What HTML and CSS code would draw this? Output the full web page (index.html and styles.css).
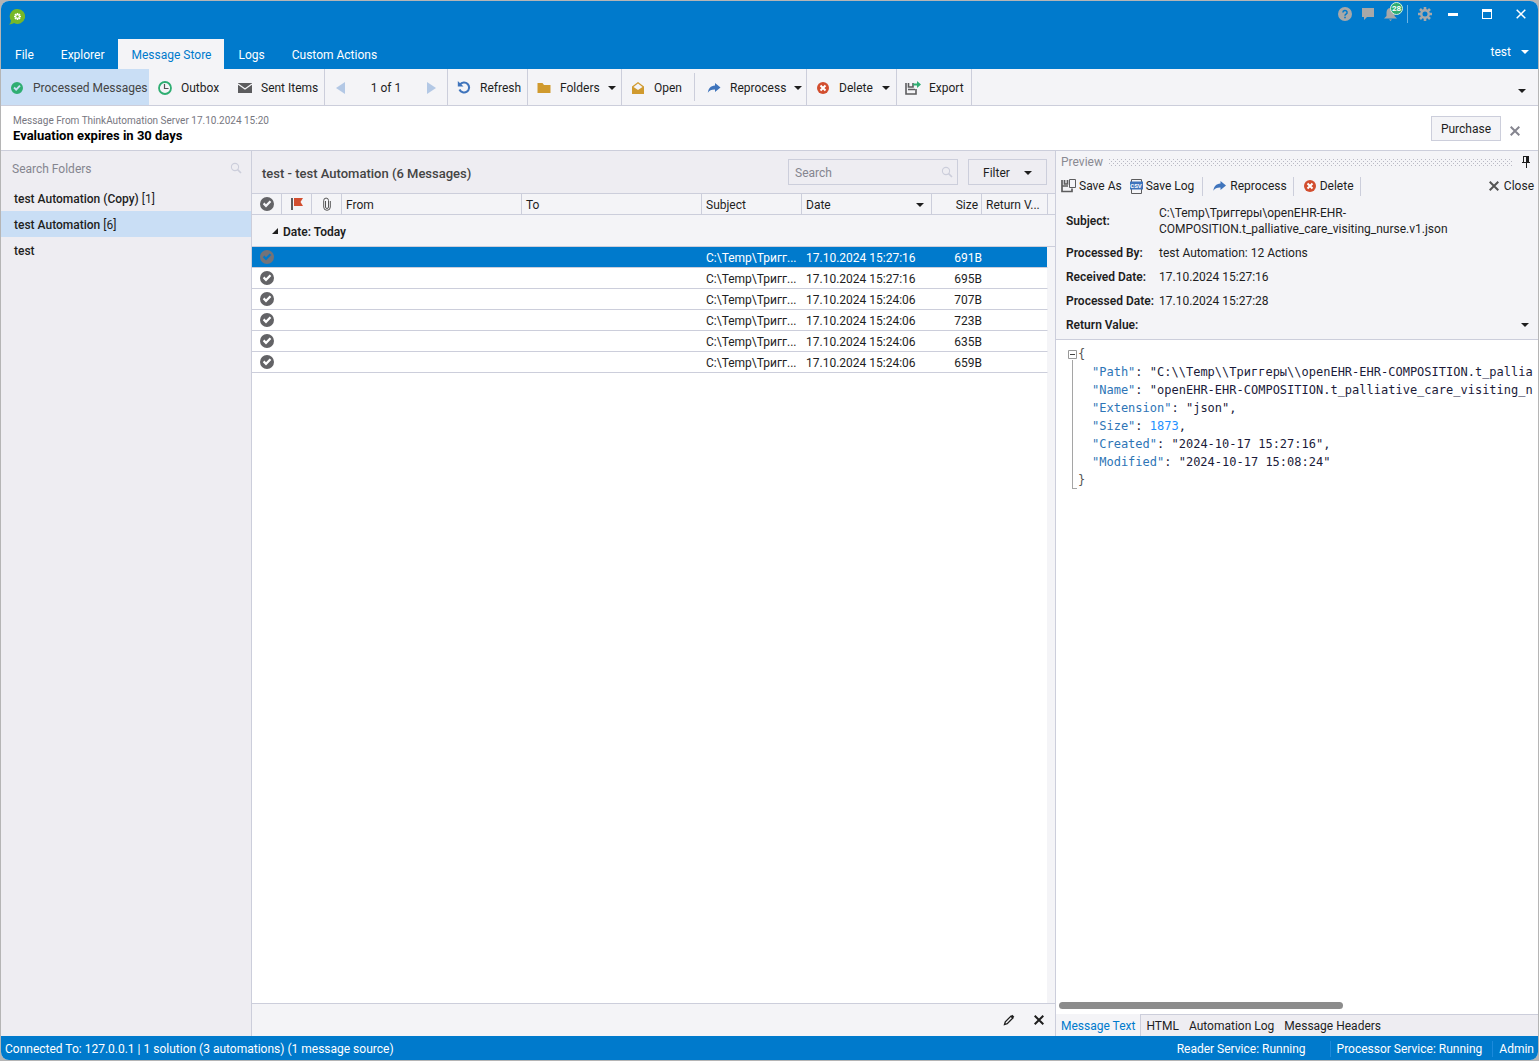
FILE: index.html
```html
<!DOCTYPE html>
<html lang="en">
<head>
  <meta charset="UTF-8" />
  <meta name="viewport" content="width=device-width, initial-scale=1.0" />
  <title>ThinkAutomation - Message Store</title>
  <link rel="stylesheet" href="styles.css">
</head>
<body>
  <!-- shared icons -->
  <svg class="defs" width="0" height="0">
    <symbol id="i-tick" viewBox="0 0 14 14"><path fill-rule="evenodd" fill="currentColor" d="M7 0a7 7 0 1 1 0 14A7 7 0 0 1 7 0zM2.8 7.2L6 10.4L11.3 5L9.7 3.5L6 7.2L4.4 5.6z"/></symbol>
    <symbol id="i-search" viewBox="0 0 12 12"><circle cx="5" cy="5" r="3.6" fill="none" stroke="currentColor" stroke-width="1.1"/><path d="M7.6 7.6L11 11" stroke="currentColor" stroke-width="1.6"/></symbol>
    <symbol id="i-caret" viewBox="0 0 8 4"><path fill="currentColor" d="M0 0h8L4 4z"/></symbol>
    <symbol id="i-redo" viewBox="0 0 13 12"><path fill="#3f74bc" d="M7.5 1L13 5.5L7.5 10V7.5C4 7.4 2 8.3.3 10.8C.8 6.600 3 3.700 7.500 3.400z"/></symbol>
    <symbol id="i-delete" viewBox="0 0 12 12"><circle cx="6" cy="6" r="6" fill="#d24e2f"/><path d="M3.500 3.500L8.500 8.500M8.500 3.500L3.500 8.500" stroke="#fff" stroke-width="2"/></symbol>
    <symbol id="i-x" viewBox="0 0 10 10"><path d="M.7 .7L9.300 9.300M9.300 .7L.7 9.300" stroke="currentColor" stroke-width="2"/></symbol>
  </svg>

  <div class="window">
    <header class="titlebar">
      <div class="title-row">
        <svg class="logo" width="16" height="16" viewBox="0 0 16 16"><path fill="#76b82a" d="M8.500 0A7.500 7.500 0 1 1 5 14.100Q3 15.600 0 15.500Q2 14 2 11.600A7.500 7.500 0 0 1 8.500 0z"/><g stroke="#fff" stroke-width="1.600"><path d="M8.500 4v7M5 7.500h7M6 5l5 5M11 5l-5 5"/></g><circle cx="8.500" cy="7.500" r="1.200" fill="#76b82a"/></svg>
        <div class="title-icons">
          <button aria-label="Help"><svg width="14" height="14" viewBox="0 0 14 14"><circle cx="7" cy="7" r="7" fill="#a8a8a8"/><path d="M4.900 5.400a2.100 2 0 1 1 3 1.800Q7 7.700 7 8.700" fill="none" stroke="#007acc" stroke-width="1.500"/><path d="M6.200 9.800h1.600v1.500H6.200z" fill="#007acc"/></svg></button>
          <button aria-label="Feedback"><svg width="12" height="12" viewBox="0 0 12 12"><path d="M0 0h12v9H5l-3 3V9H0z" fill="#a8a8a8"/></svg></button>
          <button class="bell" aria-label="Notifications"><svg width="14" height="14" viewBox="0 0 14 14"><path d="M6.500 1C9 1 10.500 3 10.500 5.500V9L13 11.500H0L2.500 9V5.500C2.500 3 4 1 6.500 1zM5 12.500h3L6.500 14z" fill="#a8a8a8"/></svg><span class="badge">28</span></button>
          <span class="title-sep"></span>
          <button aria-label="Settings"><svg width="14" height="14" viewBox="0 0 14 14"><g stroke="#a8a8a8" stroke-width="2.600"><path d="M7 0v3M7 11v3M0 7h3M11 7h3M2 2l2.200 2.200M9.800 9.800L12 12M12 2L9.800 4.200M4.200 9.800L2 12"/></g><circle cx="7" cy="7" r="3.700" fill="none" stroke="#a8a8a8" stroke-width="2.400"/></svg></button>
          <button aria-label="Minimize"><svg width="10" height="10" viewBox="0 0 10 10"><path d="M0 4h10v3H0z" fill="#fff"/></svg></button>
          <button aria-label="Maximize"><svg width="10" height="10" viewBox="0 0 10 10"><path d="M0 0h10v10H0zM1 3v6h8V3z" fill="#fff" fill-rule="evenodd"/></svg></button>
          <button aria-label="Close window"><svg width="10" height="10" viewBox="0 0 10 10"><path d="M.7 .7L9.300 9.300M9.300 .7L.7 9.300" stroke="#fff" stroke-width="1.500"/></svg></button>
        </div>
      </div>
      <div class="tab-row">
        <nav class="tabs">
          <a href="#">File</a>
          <a href="#">Explorer</a>
          <a href="#" class="active">Message Store</a>
          <a href="#">Logs</a>
          <a href="#">Custom Actions</a>
        </nav>
        <button class="user">test <svg width="8" height="4"><use href="#i-caret"/></svg></button>
      </div>
    </header>

    <div class="toolbar">
      <button class="selected"><svg class="green" width="12" height="12"><use href="#i-tick"/></svg>Processed Messages</button>
      <button><svg width="14" height="14" viewBox="0 0 14 14"><circle cx="7" cy="7" r="6" fill="none" stroke="#2fae72" stroke-width="1.800"/><path d="M6.500 3v4.500H10.500" fill="none" stroke="#555" stroke-width="1.200"/></svg>Outbox</button>
      <button class="line"><svg width="14" height="10" viewBox="0 0 14 10"><path d="M0 0h14v10H0z" fill="#5c5c5e"/><path d="M0 1l7 5l7-5" fill="none" stroke="#f4f4f7" stroke-width="1.300"/></svg>Sent Items</button>
      <div class="pager line">
        <button aria-label="Previous page"><svg width="9" height="12" viewBox="0 0 9 12"><path d="M9 0v12L0 6z" fill="#b3c8e5"/></svg></button>
        <span>1 of 1</span>
        <button aria-label="Next page"><svg width="9" height="12" viewBox="0 0 9 12"><path d="M0 0v12L9 6z" fill="#b3c8e5"/></svg></button>
      </div>
      <button class="line"><svg width="13" height="13" viewBox="0 0 13 13"><path d="M2.500 3.600A5 5 0 1 1 2 8.500" fill="none" stroke="#3f74bc" stroke-width="2.100"/><path d="M.3 0L6 5.500H.3z" fill="#3f74bc"/></svg>Refresh</button>
      <button class="line"><svg width="13" height="12" viewBox="0 0 13 12"><path d="M0 1h5l1.500 2H13v8H0z" fill="#d09a2e"/></svg>Folders<svg class="caret" width="8" height="4"><use href="#i-caret"/></svg></button>
      <button class="short-line"><svg width="12" height="12" viewBox="0 0 12 12"><path d="M0 4.500L6 0l6 4.500V12H0z" fill="#d09a2e"/><path d="M1.500 5L6 1.600L10.500 5L6 8z" fill="#f4f4f7"/></svg>Open</button>
      <button class="line"><svg width="13" height="12"><use href="#i-redo"/></svg>Reprocess<svg class="caret" width="8" height="4"><use href="#i-caret"/></svg></button>
      <button class="line"><svg width="12" height="12"><use href="#i-delete"/></svg>Delete<svg class="caret" width="8" height="4"><use href="#i-caret"/></svg></button>
      <button class="line"><svg width="16" height="14" viewBox="0 0 16 14"><path d="M1 2v11h10V8M3.500 2v4h4.500V2M3 8.500h7" fill="none" stroke="#5c5c5e" stroke-width="1.600"/><path d="M8 2.500h4V0l4 3.500L12 7V4.500H8z" fill="#2fae72"/></svg>Export</button>
      <button class="overflow" aria-label="More"><svg width="8" height="4"><use href="#i-caret"/></svg></button>
    </div>

    <div class="notice">
      <div class="notice-text">
        <div class="notice-from">Message From ThinkAutomation Server 17.10.2024 15:20</div>
        <div class="notice-title">Evaluation expires in 30 days</div>
      </div>
      <button class="box-btn">Purchase</button>
      <button class="notice-close" aria-label="Dismiss"><svg width="10" height="10"><use href="#i-x"/></svg></button>
    </div>

    <main class="main">
      <aside class="folders">
        <div class="folder-search">
          <input type="text" placeholder="Search Folders" aria-label="Search Folders">
          <svg width="12" height="12"><use href="#i-search"/></svg>
        </div>
        <a href="#">test Automation (Copy) <span>[1]</span></a>
        <a href="#" class="selected">test Automation <span>[6]</span></a>
        <a href="#">test</a>
      </aside>

      <section class="messages">
        <div class="messages-head">
          <h1>test - test Automation (6 Messages)</h1>
          <div class="search-box">
            <input type="text" placeholder="Search" aria-label="Search">
            <svg width="12" height="12"><use href="#i-search"/></svg>
          </div>
          <button class="box-btn filter">Filter <svg width="8" height="4"><use href="#i-caret"/></svg></button>
        </div>
        <div class="grid-wrap">
          <table>
            <colgroup>
              <col class="c-icon"><col class="c-icon"><col class="c-icon"><col><col>
              <col class="c-subject"><col class="c-date"><col class="c-size"><col class="c-return"><col class="c-gutter">
            </colgroup>
            <thead>
              <tr>
                <th class="icon"><svg width="14" height="14"><use href="#i-tick"/></svg></th>
                <th class="icon"><svg width="14" height="14" viewBox="0 0 14 14"><path d="M1 1h2v12H1z" fill="#5c5c5e"/><path d="M4 1h9L10.500 5L13 9H4z" fill="#d24e2f"/></svg></th>
                <th class="icon"><svg width="8" height="14" viewBox="0 0 8 14"><path d="M2.500 4v6a1.500 1.500 0 0 0 3 0V3.500a2.400 2.400 0 0 0-4.800 0V10a3.300 3.300 0 0 0 6.600 0V4" fill="none" stroke="#555" stroke-width="1"/></svg></th>
                <th>From</th>
                <th>To</th>
                <th>Subject</th>
                <th><div class="sorted">Date <svg width="8" height="4"><use href="#i-caret"/></svg></div></th>
                <th class="num">Size</th>
                <th>Return V...</th>
                <th class="gutter"></th>
              </tr>
            </thead>
            <tbody>
              <tr class="group"><td colspan="10"><svg width="6" height="6" viewBox="0 0 6 6"><path d="M6 0v6H0z" fill="#1e1e1e"/></svg>Date: Today</td></tr>
              <tr class="selected"><td class="icon"><svg width="14" height="14"><use href="#i-tick"/></svg></td><td></td><td></td><td></td><td></td><td>C:\Temp\Тригг...</td><td>17.10.2024 15:27:16</td><td class="num">691B</td><td class="last"></td><td class="gutter"></td></tr>
              <tr><td class="icon"><svg width="14" height="14"><use href="#i-tick"/></svg></td><td></td><td></td><td></td><td></td><td>C:\Temp\Тригг...</td><td>17.10.2024 15:27:16</td><td class="num">695B</td><td class="last"></td><td class="gutter"></td></tr>
              <tr><td class="icon"><svg width="14" height="14"><use href="#i-tick"/></svg></td><td></td><td></td><td></td><td></td><td>C:\Temp\Тригг...</td><td>17.10.2024 15:24:06</td><td class="num">707B</td><td class="last"></td><td class="gutter"></td></tr>
              <tr><td class="icon"><svg width="14" height="14"><use href="#i-tick"/></svg></td><td></td><td></td><td></td><td></td><td>C:\Temp\Тригг...</td><td>17.10.2024 15:24:06</td><td class="num">723B</td><td class="last"></td><td class="gutter"></td></tr>
              <tr><td class="icon"><svg width="14" height="14"><use href="#i-tick"/></svg></td><td></td><td></td><td></td><td></td><td>C:\Temp\Тригг...</td><td>17.10.2024 15:24:06</td><td class="num">635B</td><td class="last"></td><td class="gutter"></td></tr>
              <tr><td class="icon"><svg width="14" height="14"><use href="#i-tick"/></svg></td><td></td><td></td><td></td><td></td><td>C:\Temp\Тригг...</td><td>17.10.2024 15:24:06</td><td class="num">659B</td><td class="last"></td><td class="gutter"></td></tr>
            </tbody>
          </table>
          <div class="grid-rest"></div>
        </div>
        <div class="messages-foot">
          <button aria-label="Edit"><svg width="12" height="12" viewBox="0 0 12 12"><path d="M1.500 10.500L2.300 7.800L8 2.100L9.900 4L4.200 9.700z" fill="none" stroke="#1e1e1e" stroke-width="1.300"/><path d="M7.500 2.500L9.300.8L11.300 2.700L9.500 4.500z" fill="#1e1e1e"/></svg></button>
          <button aria-label="Clear"><svg width="10" height="10"><use href="#i-x"/></svg></button>
        </div>
      </section>

      <section class="preview">
        <div class="preview-title">
          <span>Preview</span>
          <svg class="grip" height="7"><defs><pattern id="dots" width="4" height="4" patternUnits="userSpaceOnUse"><path d="M0 0h1v1H0zM2 2h1v1H2z" fill="#b9b9c4"/></pattern></defs><rect width="100%" height="7" fill="url(#dots)"/></svg>
          <button aria-label="Pin"><svg width="8" height="12" viewBox="0 0 8 12"><path d="M1 0h6v6h1v1H5v5H4V7H0V6h1zM2 1v5h2V1z" fill="#1e1e1e" fill-rule="evenodd"/></svg></button>
        </div>
        <div class="preview-tools">
          <button><svg width="15" height="15" viewBox="0 0 15 15"><path d="M1 1v11.500h10V9.500M3.500 1v4h3V1M1 7h6" fill="none" stroke="#5c5c5e" stroke-width="1.700"/><path d="M8.500 .5h6v8h-6z" fill="none" stroke="#5c5c5e"/></svg>Save As</button>
          <button><svg width="13" height="15" viewBox="0 0 13 15"><path d="M1.500 .5h10v14h-10z" fill="none" stroke="#5c5c5e"/><path d="M0 2.500h13v8H0z" fill="#3f74bc"/><text x="6" y="9" class="csv">CSV</text></svg>Save Log</button>
          <span class="sep"></span>
          <button><svg width="13" height="12"><use href="#i-redo"/></svg>Reprocess</button>
          <span class="sep"></span>
          <button><svg width="12" height="12"><use href="#i-delete"/></svg>Delete</button>
          <span class="sep"></span>
          <button class="close"><svg width="10" height="10"><use href="#i-x"/></svg>Close</button>
        </div>
        <dl class="details">
          <dt>Subject:</dt><dd>C:\Temp\Триггеры\openEHR-EHR-<br>COMPOSITION.t_palliative_care_visiting_nurse.v1.json</dd>
          <dt>Processed By:</dt><dd>test Automation: 12 Actions</dd>
          <dt>Received Date:</dt><dd>17.10.2024 15:27:16</dd>
          <dt>Processed Date:</dt><dd>17.10.2024 15:27:28</dd>
          <dt>Return Value:</dt><dd class="return"><svg width="8" height="4"><use href="#i-caret"/></svg></dd>
        </dl>
        <div class="editor">
          <div class="source">
            <div class="fold"><svg width="9" height="9" viewBox="0 0 9 9"><path d="M.5 .5h8v8h-8z" fill="none" stroke="#999"/><path d="M2 4h5v1H2z" fill="#444"/></svg><span></span></div>
            <div class="code">
              <div><i>{</i></div>
              <div class="in"><b>"Path"</b>: "C:\\Temp\\Триггеры\\openEHR-EHR-COMPOSITION.t_palliative_care_visiting_nurse.v1.json",</div>
              <div class="in"><b>"Name"</b>: "openEHR-EHR-COMPOSITION.t_palliative_care_visiting_nurse.v1.json",</div>
              <div class="in"><b>"Extension"</b>: "json",</div>
              <div class="in"><b>"Size"</b>: <em>1873</em>,</div>
              <div class="in"><b>"Created"</b>: "2024-10-17 15:27:16",</div>
              <div class="in"><b>"Modified"</b>: "2024-10-17 15:08:24"</div>
              <div><i>}</i></div>
            </div>
          </div>
          <div class="hscroll"><span></span></div>
        </div>
        <nav class="view-tabs">
          <a href="#" class="active">Message Text</a>
          <a href="#">HTML</a>
          <a href="#">Automation Log</a>
          <a href="#">Message Headers</a>
        </nav>
      </section>
    </main>

    <footer class="statusbar">
      <span class="connection">Connected To: 127.0.0.1 | 1 solution (3 automations) (1 message source)</span>
      <span class="reader">Reader Service: Running</span>
      <span class="processor">Processor Service: Running</span>
      <span class="admin">Admin</span>
    </footer>
  </div>
</body>
</html>
```

FILE: styles.css
```css
* {
  box-sizing: border-box;
}
body {
  margin: 0;
  height: 100vh;
  padding: 1px;
  background: #b5b5b5;
  font: 12px/16px Roboto, "Noto Sans", sans-serif;
  color: #1e1e1e;
}
button {
  font: inherit;
  color: inherit;
  background: none;
  border: 0;
  padding: 0;
  display: flex;
  align-items: center;
  white-space: nowrap;
}
a {
  color: inherit;
  text-decoration: none;
}
svg {
  display: block;
  flex: none;
}
.defs {
  position: absolute;
}
input {
  font: inherit;
  color: inherit;
  border: 0;
  padding: 2px 0 0;
  background: none;
  flex: 1;
  min-width: 0;
}
input::placeholder {
  color: #85858f;
}
.window {
  height: 100%;
  display: flex;
  flex-direction: column;
  border-radius: 8px;
  overflow: hidden;
  background: #f4f4f7;
}

/* title bar */
.titlebar {
  background: #007acc;
  color: #fff;
}
.title-row {
  height: 38px;
  display: flex;
  justify-content: space-between;
  align-items: flex-start;
  padding: 5px 0 0 8px;
}
.logo {
  margin-top: 3px;
}
.title-icons {
  display: flex;
  align-items: center;
  height: 16px;
}
.title-icons button {
  width: 23px;
  justify-content: center;
}
.title-icons button:nth-last-child(-n+3) {
  width: 34px;
}
.title-icons .title-sep {
  width: 1px;
  height: 18px;
  background: #6db3e2;
  margin: 0 5px;
}
.bell {
  position: relative;
}
.badge {
  position: absolute;
  left: 11px;
  top: -5px;
  width: 13px;
  height: 13px;
  border-radius: 50%;
  background: #2fae72;
  border: 1px solid #d5efe2;
  font-size: 8px;
  line-height: 11px;
  font-weight: 700;
  text-align: center;
}
.tab-row {
  display: flex;
  justify-content: space-between;
  height: 30px;
}
.tabs {
  display: flex;
}
.tabs a {
  padding: 8px 13px 0 14px;
}
.tabs .active {
  background: #f4f4f7;
  color: #007acc;
}
.user {
  gap: 10px;
  height: 26px;
  padding-right: 9px;
}

/* toolbar */
.toolbar {
  display: grid;
  grid-template-columns: 148px 80px 96px 123px 80px 94px 73px 112px 90px 75px 1fr;
  height: 37px;
  border-bottom: 1px solid #cccedb;
}
.toolbar > button {
  padding: 1px 0 0 8px;
  gap: 8px;
}
/* every leading icon is centred in the same 16px slot */
.toolbar > button > svg:first-child {
  width: 16px;
}
.toolbar .selected {
  background: #c9def5;
  color: #444;
}
.toolbar .line {
  border-right: 1px solid #cccedb;
}
.toolbar .short-line {
  background: linear-gradient(#cccedb, #cccedb) right / 1px 28px no-repeat;
}
.toolbar .short-line + button {
  padding-left: 11px;
}
.toolbar .caret {
  margin-left: auto;
  margin-right: 6px;
}
.toolbar .pager {
  display: flex;
  align-items: center;
  justify-content: space-between;
  padding: 1px 11px 0;
}
.toolbar .overflow {
  justify-content: flex-end;
  padding: 7px 8px 0 0;
}
.green {
  color: #2fae72;
}

/* evaluation notice */
.notice {
  display: flex;
  align-items: center;
  height: 45px;
  padding: 1px 18px 0 12px;
  background: #fff;
  border-bottom: 1px solid #cccedb;
}
.notice-text {
  flex: 1;
}
.notice-from {
  font-size: 10px;
  line-height: 14px;
  color: #77777f;
}
.notice-title {
  font-size: 13px;
  font-weight: 700;
  color: #000;
}
.box-btn {
  height: 25px;
  padding: 0 9px;
  background: #f4f4f7;
  border: 1px solid #cccedb;
}
.notice-close {
  margin-left: 9px;
  padding-top: 4px;
  color: #85858f;
}

/* panes */
.main {
  flex: 1;
  min-height: 0;
  display: grid;
  grid-template-columns: 251px 1fr 482px;
}
.folders {
  background: #eeedf2;
  border-right: 1px solid #cccedb;
}
.folder-search {
  display: flex;
  align-items: center;
  height: 34px;
  padding: 0 9px 0 11px;
  color: #cccedb;
}
.folders a {
  display: block;
  padding: 6px 13px 4px;
  font-weight: 500;
}
.folders a span {
  font-weight: 400;
}
.folders .selected {
  background: #c9def5;
}
.messages {
  display: flex;
  flex-direction: column;
  min-width: 0;
  border-right: 1px solid #cccedb;
}
.messages-head {
  display: flex;
  align-items: center;
  gap: 10px;
  height: 42px;
  padding: 0 8px 0 10px;
  background: #eeedf2;
}
.messages-head h1 {
  flex: 1;
  margin: 0;
  padding-top: 4px;
  font-size: 13px;
  line-height: 16px;
  font-weight: 500;
  color: #444;
}
.search-box {
  display: flex;
  align-items: center;
  width: 170px;
  height: 26px;
  padding: 0 4px 0 6px;
  border: 1px solid #cccedb;
  color: #cccedb;
}
.filter {
  width: 79px;
  height: 26px;
  padding: 1px 14px 0;
  justify-content: space-between;
  background: #eeedf2;
}
.grid-wrap {
  flex: 1;
  display: flex;
  flex-direction: column;
  background: #f4f4f7;
}
.grid-rest {
  flex: 1;
  margin-right: 8px;
  background: #fff;
}
table {
  width: 100%;
  table-layout: fixed;
  border-collapse: separate;
  border-spacing: 0;
}
.c-icon {
  width: 30px;
}
.c-subject {
  width: 100px;
}
.c-date {
  width: 130px;
}
.c-size {
  width: 50px;
}
.c-return {
  width: 66px;
}
.c-gutter {
  width: 7px;
}
th {
  height: 22px;
  padding: 2px 3px 0 4px;
  font-weight: 400;
  text-align: left;
  white-space: nowrap;
  border: solid #cccedb;
  border-width: 1px 1px 1px 0;
}
td {
  height: 21px;
  padding: 2px 0 0 4px;
  white-space: nowrap;
  background: #fff;
  border-bottom: 1px solid #cccedb;
}
.icon {
  padding: 0;
  color: #636366;
}
.icon svg {
  margin: 0 auto;
}
.num {
  text-align: right;
}
.sorted {
  display: flex;
  justify-content: space-between;
  align-items: center;
  padding-right: 4px;
}
th.gutter {
  border-right: 0;
}
td.gutter {
  background: #f4f4f7;
  border: 0;
}
.last {
  border-right: 1px solid #f4f4f7;
}
.group td {
  height: 32px;
  padding-left: 20px;
  background: #f4f4f7;
  font-weight: 600;
}
.group svg {
  display: inline-block;
  margin: 0 5px 2px 0;
}
table .selected td:not(.gutter) {
  background: #007acc;
  color: #fff;
}
table .selected td.icon {
  color: #737378;
}
.messages-foot {
  display: flex;
  justify-content: flex-end;
  align-items: center;
  gap: 19px;
  height: 33px;
  padding-right: 11px;
  border-top: 1px solid #cccedb;
}

/* preview pane */
.preview {
  display: flex;
  flex-direction: column;
  min-width: 0;
}
.preview-title {
  display: flex;
  align-items: center;
  height: 21px;
  padding: 1px 8px 0 5px;
  color: #8a8a92;
}
.grip {
  flex: 1;
  min-width: 0;
  margin: 0 9px 0 6px;
}
.preview-tools {
  display: flex;
  align-items: center;
  height: 26px;
  padding: 2px 4px 0 5px;
}
.preview-tools button {
  gap: 3px;
  margin-right: 8px;
}
.preview-tools .sep {
  width: 1px;
  height: 19px;
  margin-right: 10px;
  background: #cccedb;
}
.preview-tools .sep + button {
  gap: 4px;
  margin-right: 6px;
}
.preview-tools .sep + .close {
  margin: 0 0 0 auto;
  gap: 5px;
}
.preview-tools .close svg {
  color: #555;
}
.csv {
  font-size: 6px;
  font-weight: 700;
  fill: #fff;
  text-anchor: middle;
}
.details {
  display: grid;
  grid-template-columns: 93px 1fr;
  align-items: center;
  row-gap: 8px;
  margin: 0;
  padding: 7px 9px 6px 10px;
  border-bottom: 1px solid #cccedb;
}
dt {
  font-weight: 600;
  white-space: nowrap;
}
dd {
  margin: 0;
}
.return {
  display: flex;
  justify-content: flex-end;
}
.editor {
  flex: 1;
  min-height: 0;
  display: flex;
  flex-direction: column;
  justify-content: space-between;
  padding: 5px 5px 5px 3px;
  background: #fff;
}
.source {
  display: flex;
  overflow: hidden;
  padding-left: 9px;
}
.fold {
  flex: none;
  display: flex;
  flex-direction: column;
  padding-top: 5px;
  width: 10px;
}
.fold span {
  flex: 1;
  margin: 1px 1px 0 4px;
  border: solid #a5a5a5;
  border-width: 0 0 1px 1px;
}
.code {
  font: 12px/18px "DejaVu Sans Mono", monospace;
  color: #1b1b3a;
  white-space: nowrap;
}
.code .in {
  padding-left: 14px;
}
.code i,
.code b,
.code em {
  font-style: normal;
  font-weight: 400;
}
.code i {
  color: #555;
}
.code b {
  color: #2e75b6;
}
.code em {
  color: #1e90ff;
}
.hscroll span {
  display: block;
  width: 60%;
  height: 7px;
  border-radius: 4px;
  background: #8c8c8c;
}
.view-tabs {
  display: flex;
  height: 22px;
  background: linear-gradient(#cccedb, #cccedb) top / 100% 1px no-repeat #eeedf2;
}
.view-tabs a {
  padding: 4px 5px 0;
}
.view-tabs .active {
  background: #f4f4f7;
  color: #007acc;
  border-right: 1px solid #cccedb;
}

/* status bar */
.statusbar {
  display: flex;
  align-items: center;
  height: 24px;
  padding: 2px 4px 0;
  background: #007acc;
  color: #fff;
  white-space: nowrap;
}
.connection {
  flex: 1;
}
.reader {
  padding-right: 24px;
}
.processor,
.admin {
  padding-left: 6px;
  border-left: 1px solid #1c8adb;
}
.processor {
  padding-right: 10px;
}
```
